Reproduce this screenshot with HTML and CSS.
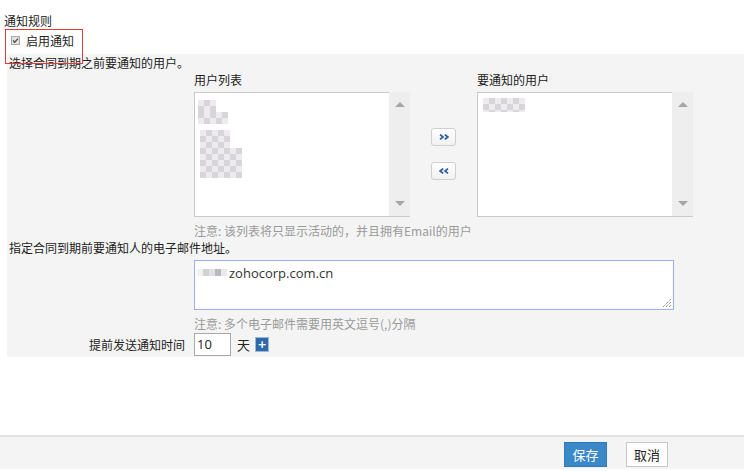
FILE: index.html
```html
<!DOCTYPE html>
<html lang="zh-CN">
<head>
<meta charset="utf-8">
<title>通知规则</title>
<link rel="stylesheet" href="styles.css">
</head>
<body>
<div class="title">通知规则</div>
<div class="enable">
  <span class="cb"><svg width="9" height="9" viewBox="0 0 9 9"><rect x="0.5" y="0.5" width="8" height="8" fill="#e2e2e2" stroke="#a8a8a8"/><path d="M2 4.6 L3.7 6.3 L7 2.6" fill="none" stroke="#505050" stroke-width="1.4"/></svg></span>
  <span class="enable-text">启用通知</span>
</div>
<div class="panel">
  <div class="intro">选择合同到期之前要通知的用户。</div>
  <div class="picker">
    <div class="col">
      <div class="col-label">用户列表</div>
      <div class="listbox">
        <div class="list-body">
          <div class="mz mz-a"></div>
          <div class="mz mz-b"></div>
          <div class="mz mz-c"></div>
          <div class="mz mz-d"></div>
        </div>
        <div class="sbar"><span class="arr up"></span><span class="arr down"></span></div>
      </div>
    </div>
    <div class="movers">
      <button class="mv" aria-label="添加"><svg width="10" height="6" viewBox="0 0 10 6"><path d="M1 0.6 L4 3 L1 5.4 M5.8 0.6 L8.8 3 L5.8 5.4" fill="none" stroke="#2c5f9e" stroke-width="1.7"/></svg></button>
      <button class="mv" aria-label="移除"><svg width="10" height="6" viewBox="0 0 10 6"><path d="M4.2 0.6 L1.2 3 L4.2 5.4 M9 0.6 L6 3 L9 5.4" fill="none" stroke="#2c5f9e" stroke-width="1.7"/></svg></button>
    </div>
    <div class="col">
      <div class="col-label">要通知的用户</div>
      <div class="listbox">
        <div class="list-body">
          <div class="mz mz-r"></div>
        </div>
        <div class="sbar"><span class="arr up"></span><span class="arr down"></span></div>
      </div>
    </div>
  </div>
  <div class="note">注意: 该列表将只显示活动的，并且拥有Email的用户</div>
  <div class="intro intro2">指定合同到期前要通知人的电子邮件地址。</div>
  <div class="textarea">
    <span class="mz mz-inline"></span><span class="email">zohocorp.com.cn</span>
    <svg class="grip" width="10" height="10" viewBox="0 0 10 10"><path d="M1 9 L9 1 M4 9 L9 4 M7 9 L9 7" stroke="#666" stroke-width="1" stroke-dasharray="1 1"/></svg>
  </div>
  <div class="note">注意: 多个电子邮件需要用英文逗号(,)分隔</div>
  <div class="days-row">
    <span class="days-label">提前发送通知时间</span>
    <span class="num">10</span>
    <span class="unit">天</span>
    <span class="plus">+</span>
  </div>
</div>
<div class="footer">
  <button class="btn save">保存</button>
  <button class="btn cancel">取消</button>
</div>
</body>
</html>
```

FILE: styles.css
```css
html, body {
  margin: 0;
  padding: 0;
  background: #ffffff;
}
body {
  font-family: "Noto Sans CJK SC", "Open Sans", sans-serif;
  font-size: 12px;
  line-height: 16px;
  color: #333333;
  width: 744px;
  height: 471px;
  overflow: hidden;
}
.title {
  padding: 13px 0 0 4px;
  height: 16px;
  color: #222;
}
.enable {
  position: relative;
  z-index: 1;
  display: flex;
  align-items: flex-start;
  margin: 0 0 -10px 5px;
  width: 76px;
  height: 33px;
  border: 1px solid #e23b3b;
  padding: 0;
  box-sizing: content-box;
}
.cb {
  display: block;
  margin: 6px 0 0 5px;
  width: 9px;
  height: 9px;
}
.cb svg { display: block; }
.enable-text {
  margin: 3px 0 0 6px;
  color: #222;
}
.panel {
  margin-left: 7px;
  background: #f4f4f4;
  padding: 1px 0 1px 0;
  height: 301px;
}
.intro {
  padding-left: 2px;
  color: #222;
}
.picker {
  display: flex;
  margin: 1px 0 0 187px;
}
.col {
  width: 216px;
}
.col-label {
  color: #222;
  margin-bottom: 4px;
}
.listbox {
  display: flex;
  height: 125px;
}
.list-body {
  flex: 1;
  background: #fff;
  border: 1px solid #c9c9c9;
  border-right: none;
  padding: 7px 0 0 2px;
}
.sbar {
  width: 21px;
  background: #eeeeee;
  border-bottom: 1px solid #c9c9c9;
  display: flex;
  flex-direction: column;
  justify-content: space-between;
  align-items: center;
  padding: 10px 0 10px 0;
  box-sizing: border-box;
}
.arr {
  width: 0;
  height: 0;
  border-left: 5px solid transparent;
  border-right: 5px solid transparent;
}
.arr.up { border-bottom: 5px solid #a6a6a6; }
.arr.down { border-top: 5px solid #a6a6a6; }

.mz {
  display: block;
  background:
    repeating-conic-gradient(#cdcad0 0 25%, #e8e6ea 0 50%) 0 0 / 12px 12px;
  opacity: 0.8;
}
.mz-a { width: 18px; height: 12px; margin-left: 1px; }
.mz-b { width: 30px; height: 12px; margin: 0 0 6px 1px; background-position: 6px 0; }
.mz-c { width: 30px; height: 18px; margin-left: 3px; }
.mz-d { width: 42px; height: 30px; margin-left: 3px; background-position: 6px 0; }
.mz-r { width: 42px; height: 14px; margin: -2px 0 0 3px; }

.movers {
  width: 67px;
  display: flex;
  flex-direction: column;
  align-items: center;
  padding-top: 56px;
  box-sizing: border-box;
}
.mv {
  display: flex;
  align-items: center;
  justify-content: center;
  width: 25px;
  height: 18px;
  margin: 0 0 16px 0;
  padding: 0;
  border: 1px solid #cfcfcf;
  border-radius: 3px;
  background: linear-gradient(#ffffff, #f1f1f1);
}
.mv svg { display: block; }
.note {
  margin: 6px 0 0 187px;
  color: #9a9a9a;
}
.intro2 {
  margin-top: 1px;
}
.textarea {
  position: relative;
  margin: 4px 0 0 187px;
  width: 478px;
  height: 48px;
  background: #fff;
  border: 1px solid #9caef5;
  display: flex;
  align-items: flex-start;
  padding: 0;
}
.mz-inline {
  width: 30px;
  height: 7px;
  margin: 8px 0 0 2px;
  background: linear-gradient(90deg, #eeedef 0 6px, #c9c6cb 6px 12px, #dad8dc 12px 18px, #aaa6ad 18px 24px, #e6e4e8 24px 30px);
}
.email {
  font-family: "Open Sans", sans-serif;
  font-size: 13px;
  line-height: 18px;
  color: #333;
  margin: 3px 0 0 2px;
}
.grip {
  position: absolute;
  right: 1px;
  bottom: 1px;
}
.days-row {
  display: flex;
  align-items: center;
  margin-top: 1px;
  height: 23px;
}
.days-label {
  width: 178px;
  text-align: right;
  color: #222;
  margin-right: 9px;
}
.num {
  height: 21px;
  border: 1px solid #a9a9a9;
  background: #fff;
  font-family: "Open Sans", sans-serif;
  font-size: 13px;
  line-height: 21px;
  padding-left: 2px;
  box-sizing: content-box;
  width: 33px;
  color: #222;
}
.unit {
  margin-left: 6px;
  color: #222;
  font-size: 13px;
}
.plus {
  margin-left: 5px;
  width: 12px;
  height: 13px;
  background: #2e6aa8;
  border: 1px solid #9fb8d6;
  color: #fff;
  font-family: "DejaVu Sans", sans-serif;
  font-weight: bold;
  font-size: 11px;
  line-height: 13px;
  text-align: center;
}
.footer {
  margin-top: 78px;
  border-top: 2px solid #e2e2e2;
  background: #f4f4f4;
  height: 34px;
  display: flex;
  justify-content: flex-end;
  align-items: flex-start;
  padding: 5px 76px 0 0;
  box-sizing: border-box;
  gap: 19px;
}
.btn {
  height: 25px;
  padding: 0;
  font-family: "Noto Sans CJK SC", sans-serif;
  font-size: 13px;
  line-height: 23px;
  border-radius: 0;
}
.save {
  width: 43px;
  background: #3b88c9;
  border: 1px solid #2f7abb;
  color: #fff;
}
.cancel {
  width: 42px;
  background: #fff;
  border: 1px solid #c8c8c8;
  color: #222;
}
```
